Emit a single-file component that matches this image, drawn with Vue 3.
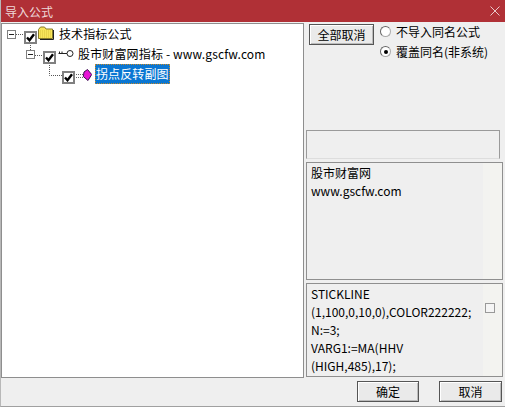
<script setup>
const rows = [
  { cls: 'l0', exp: true, icon: 'folder', text: '技术指标公式' },
  { cls: 'l1', exp: true, icon: 'key', text: '股市财富网指标 - www.gscfw.com' },
  { cls: 'l2', exp: false, icon: 'gem', text: '拐点反转副图', sel: true },
]
const code = ['STICKLINE', '(1,100,0,10,0),COLOR222222;', 'N:=3;', 'VARG1:=MA(HHV', '(HIGH,485),17);']
</script>

<template>
  <div class="win">
    <header class="title">
      <span class="ttext">导入公式</span>
      <svg class="close" width="10" height="10" viewBox="0 0 10 10"><path d="M0.5 0.5L9.5 9.5M9.5 0.5L0.5 9.5" stroke="#e9c9ca" stroke-width="1" fill="none"/></svg>
    </header>
    <div class="main">
      <section class="tree">
        <svg class="lines" width="80" height="70" viewBox="0 0 80 70">
          <g stroke="#555" stroke-width="1" stroke-dasharray="1 1" fill="none">
            <path d="M14 10.5H22"/>
            <path d="M28.5 19V27"/>
            <path d="M33 31.5H41"/>
            <path d="M47.5 39V51.5H60"/>
          </g>
        </svg>
        <div v-for="r in rows" :key="r.text" class="row" :class="r.cls">
          <span v-if="r.exp" class="exp"><i></i></span>
          <span class="chk">
            <svg width="9" height="9" viewBox="0 0 9 9"><path d="M1 4.5L3.5 7.2L8 1.2" stroke="#000" stroke-width="2.4" fill="none"/></svg>
          </span>
          <svg v-if="r.icon === 'folder'" class="ic folder" width="16" height="14" viewBox="0 0 16 14">
            <path d="M0.5 3.5L2.5 1H6.5L8 3H14.5V12.5H0.5Z" fill="#f8e55a" stroke="#857a2a"/>
            <path d="M15.5 4V13.5H2" stroke="#222" fill="none"/>
            <path d="M2 5H13M2 7H13M2 9H13M2 11H13" stroke="#d9c23c" stroke-dasharray="1 1"/>
          </svg>
          <svg v-else-if="r.icon === 'key'" class="ic key" width="16" height="9" viewBox="0 0 16 9">
            <circle cx="12" cy="4.5" r="3" fill="#fff" stroke="#222"/>
            <path d="M0.5 4.5H9M1.5 4.5V2.5M4 4.5V2.5" stroke="#222" fill="none"/>
          </svg>
          <svg v-else class="ic gem" width="16" height="12" viewBox="0 0 16 12">
            <path d="M0 5.5H7M0 8.5H7" stroke="#666" stroke-dasharray="1 1"/>
            <path d="M11.5 0.5L15.7 5.5L12 11.5L7.3 7.5L8 3Z" fill="#e815d6" stroke="#3a1050" stroke-width="1"/>
          </svg>
          <span class="label" :class="{ sel: r.sel }">{{ r.text }}</span>
        </div>
      </section>
      <aside class="side">
        <div class="top">
          <button class="btn all">全部取消</button>
          <div class="radios">
            <label class="radio"><span class="dot"></span>不导入同名公式</label>
            <label class="radio"><span class="dot on"></span>覆盖同名(非系统)</label>
          </div>
        </div>
        <div class="empty"></div>
        <div class="info">
          <div class="scroll">股市财富网<br>www.gscfw.com</div>
        </div>
        <div class="codebox">
          <div class="scroll code">
            <div v-for="c in code" :key="c">{{ c }}</div>
          </div>
          <span class="cb"></span>
        </div>
      </aside>
    </div>
    <footer class="foot">
      <button class="btn ok">确定</button>
      <button class="btn cancel">取消</button>
    </footer>
  </div>
</template>

<style>
html, body { margin: 0; padding: 0; background: #efefef; }
</style>

<style scoped>
.win {
  width: 505px; height: 407px; box-sizing: border-box; overflow: hidden;
  background: #efefef; display: flex; flex-direction: column;
  font-family: "Noto Sans CJK SC", "Liberation Sans", sans-serif; font-size: 12px; color: #000;
  border-bottom: 1px solid #a0a0a0; border-left: 1px solid #b8b8b8;
}
.title {
  height: 22px; margin-left: -1px; flex: none; background: #b03036; display: flex; align-items: center;
  justify-content: space-between; padding: 0 5px 0 5px; color: #eed9da;
}
.ttext { font-size: 12px; }
.main { height: 355px; flex: none; margin-top: 1px; display: flex; }
.tree {
  position: relative; width: 303px; height: 355px; box-sizing: border-box; flex: none;
  background: #fff; border: 1px solid #8e8e8e;
}
.lines { position: absolute; left: 0; top: 0; }
.row { display: flex; align-items: center; height: 20px; position: relative; }
.l0 { padding-left: 5px; }
.l1 { padding-left: 24px; }
.l2 { padding-left: 60px; }
.exp {
  width: 9px; height: 9px; box-sizing: border-box; border: 1px solid #808080; background: #fff;
  display: flex; align-items: center; justify-content: center; margin-right: 8px; flex: none;
}
.l1 .exp { margin-top: 1px; }
.exp i { width: 5px; height: 1px; background: #222; display: block; }
.chk {
  width: 13px; height: 13px; box-sizing: border-box; border: 2px solid #808080; background: #fff;
  display: flex; align-items: center; justify-content: center; margin-top: 6px; flex: none;
}
.ic { flex: none; margin-left: 1px; }
.folder { margin-top: -2px; }
.key { margin-top: -2px; margin-left: 2px; }
.gem { margin-top: 1px; margin-left: 1px; }
.l0 .label { margin-left: 4px; }
.l1 .label { margin-left: 3px; letter-spacing: 0.15px; }
.l2 .label { margin-left: 3px; }
.label { font-size: 12px; white-space: nowrap; letter-spacing: 0.1px; line-height: 16px; color: #000; padding: 0 1px; }
.label.sel { background: #0a76d2; color: #fff; outline: 1px dotted #c68a2a; outline-offset: -1px; height: 20px; line-height: 20px; }
.side { flex: 1; min-width: 0; padding-left: 2px; display: flex; flex-direction: column; }
.top { height: 107px; flex: none; display: flex; padding: 1px 0 0 3px; box-sizing: border-box; }
.btn {
  font: inherit; font-size: 12px; color: #000; padding: 0; background: #eaeaea;
  border: 1px solid #555; box-shadow: inset 1px 1px 0 #fff, inset -1px -1px 0 #bbb;
  height: 21px; box-sizing: border-box; line-height: 17px;
}
.all { width: 65px; }
.radios { margin-left: 6px; display: flex; flex-direction: column; gap: 1px; margin-top: -2px; }
.radio { display: flex; align-items: center; height: 19px; font-size: 12px; white-space: nowrap; }
.dot {
  width: 11px; height: 11px; box-sizing: border-box; border-radius: 50%; background: #fff; border: 1px solid #aaa;
  border-top-color: #666; border-left-color: #666; margin-right: 5px; display: flex; align-items: center; justify-content: center;
}
.dot.on::after { content: ""; width: 4px; height: 4px; border-radius: 50%; background: #000; }
.empty {
  width: 194px; height: 29px; box-sizing: border-box; flex: none; border: 1px solid #9a9a9a; border-bottom-color: #ddd; background: #efefef;
}
.info {
  margin-top: 3px; width: 197px; height: 118px; box-sizing: border-box; flex: none; border: 1px solid #8f8f8f; background: #f3f3f0;
}
.scroll { background: #efefef; width: 176px; height: 100%; box-sizing: border-box; padding: 1px 4px 0; line-height: 18px; font-size: 12px; }
.codebox {
  margin-top: 3px; width: 197px; height: 94px; box-sizing: border-box; flex: none; border: 1px solid #8f8f8f; background: #f3f3f0; position: relative;
}
.code { white-space: nowrap; }
.cb { position: absolute; right: 7px; top: 19px; width: 10px; height: 10px; box-sizing: border-box; border: 1px solid #999; background: #f5f5f5; }
.foot { flex: 1; display: flex; justify-content: flex-end; align-items: center; gap: 20px; padding-right: 3px; padding-bottom: 1px; }
.ok { width: 62px; }
.cancel { width: 63px; }
</style>
